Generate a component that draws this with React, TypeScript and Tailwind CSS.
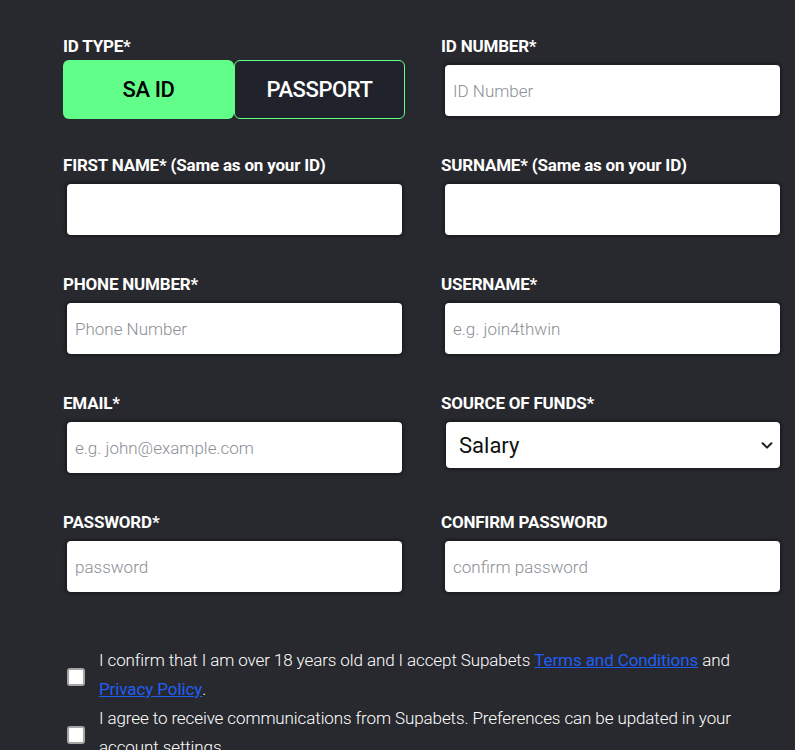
import React from "react";

const font = { fontFamily: "Roboto, 'Noto Sans', sans-serif" };

function Label({ children }: { children: React.ReactNode }) {
  return (
    <div className="h-5 leading-5 text-[17px] font-bold text-white tracking-[-0.2px] whitespace-nowrap">
      {children}
    </div>
  );
}

function TextInput({ placeholder }: { placeholder?: string }) {
  return (
    <input
      type="text"
      placeholder={placeholder}
      className="mt-[9px] ml-1 mr-[3px] block h-[51px] w-[calc(100%-7px)] rounded-[4px] bg-white px-2 text-[17px] font-light text-black outline-none shadow-[0_0_3px_2px_#1b1d23] placeholder:text-[#8b8f96]"
      style={font}
    />
  );
}

function Check() {
  return (
    <span className="mt-[3px] block h-[18px] w-[18px] shrink-0 rounded-[3px] border-2 border-[#a5a5a5] bg-white" />
  );
}

export default function App() {
  return (
    <div className="min-h-screen w-full bg-[#28292e] text-white" style={font}>
      <div className="pl-[63px] pr-[12px] pt-[36px]">
        <div className="grid grid-cols-[342px_342px] gap-x-[36px] gap-y-[39px]">
          {/* Row 1 */}
          <div>
            <Label>ID TYPE*</Label>
            <div className="mt-[4px] -mb-[3px] flex h-[59px] w-[342px]">
              <button className="flex h-full w-[171px] items-center justify-center rounded-[6px] bg-[#62fe8a] text-[22px] font-medium tracking-[-0.4px] text-black">
                SA ID
              </button>
              <button className="flex h-full w-[171px] items-center justify-center rounded-[6px] border border-[#62fe8a] bg-[#20232b] text-[22px] font-medium tracking-[-0.4px] text-white">
                PASSPORT
              </button>
            </div>
          </div>
          <div>
            <Label>ID NUMBER*</Label>
            <TextInput placeholder="ID Number" />
          </div>

          {/* Row 2 */}
          <div>
            <Label>FIRST NAME* (Same as on your ID)</Label>
            <TextInput />
          </div>
          <div>
            <Label>SURNAME* (Same as on your ID)</Label>
            <TextInput />
          </div>

          {/* Row 3 */}
          <div>
            <Label>PHONE NUMBER*</Label>
            <TextInput placeholder="Phone Number" />
          </div>
          <div>
            <Label>USERNAME*</Label>
            <TextInput placeholder="e.g. join4thwin" />
          </div>

          {/* Row 4 */}
          <div>
            <Label>EMAIL*</Label>
            <TextInput placeholder="e.g. john@example.com" />
          </div>
          <div>
            <Label>SOURCE OF FUNDS*</Label>
            <div className="relative mt-[9px] ml-[5px] mr-[3px] mb-[5px] flex h-[46px] items-center rounded-[4px] bg-white pl-[13px] shadow-[0_0_3px_2px_#1b1d23]">
              <span className="text-[22px] font-normal text-[#111]">Salary</span>
              <svg
                className="absolute right-[6px] top-1/2 -translate-y-1/2"
                width="14"
                height="14"
                viewBox="0 0 16 16"
                fill="none"
                stroke="#222"
                strokeWidth="2.4"
                strokeLinecap="round"
                strokeLinejoin="round"
              >
                <path d="M3 6l5 5 5-5" />
              </svg>
            </div>
          </div>

          {/* Row 5 */}
          <div>
            <Label>PASSWORD*</Label>
            <TextInput placeholder="password" />
          </div>
          <div>
            <Label>CONFIRM PASSWORD</Label>
            <TextInput placeholder="confirm password" />
          </div>
        </div>

        <div className="mt-[54px] flex flex-col pl-1">
          <div className="flex items-center gap-[14px]">
            <Check />
            <p className="text-[17px] font-light leading-[29px] tracking-[-0.1px] text-white">
              I confirm that I am over 18 years old and I accept Supabets{" "}
              <a className="font-normal text-[#1f5ef5] underline" href="#">
                Terms and Conditions
              </a>{" "}
              and
              <br />
              <a className="font-normal text-[#1f5ef5] underline" href="#">
                Privacy Policy
              </a>
              .
            </p>
          </div>
          <div className="flex items-center gap-[14px]">
            <Check />
            <p className="text-[17px] font-light leading-[29px] tracking-[-0.1px] text-white">
              I agree to receive communications from Supabets. Preferences can be updated in your
              <br />
              account settings.
            </p>
          </div>
        </div>
      </div>
    </div>
  );
}
